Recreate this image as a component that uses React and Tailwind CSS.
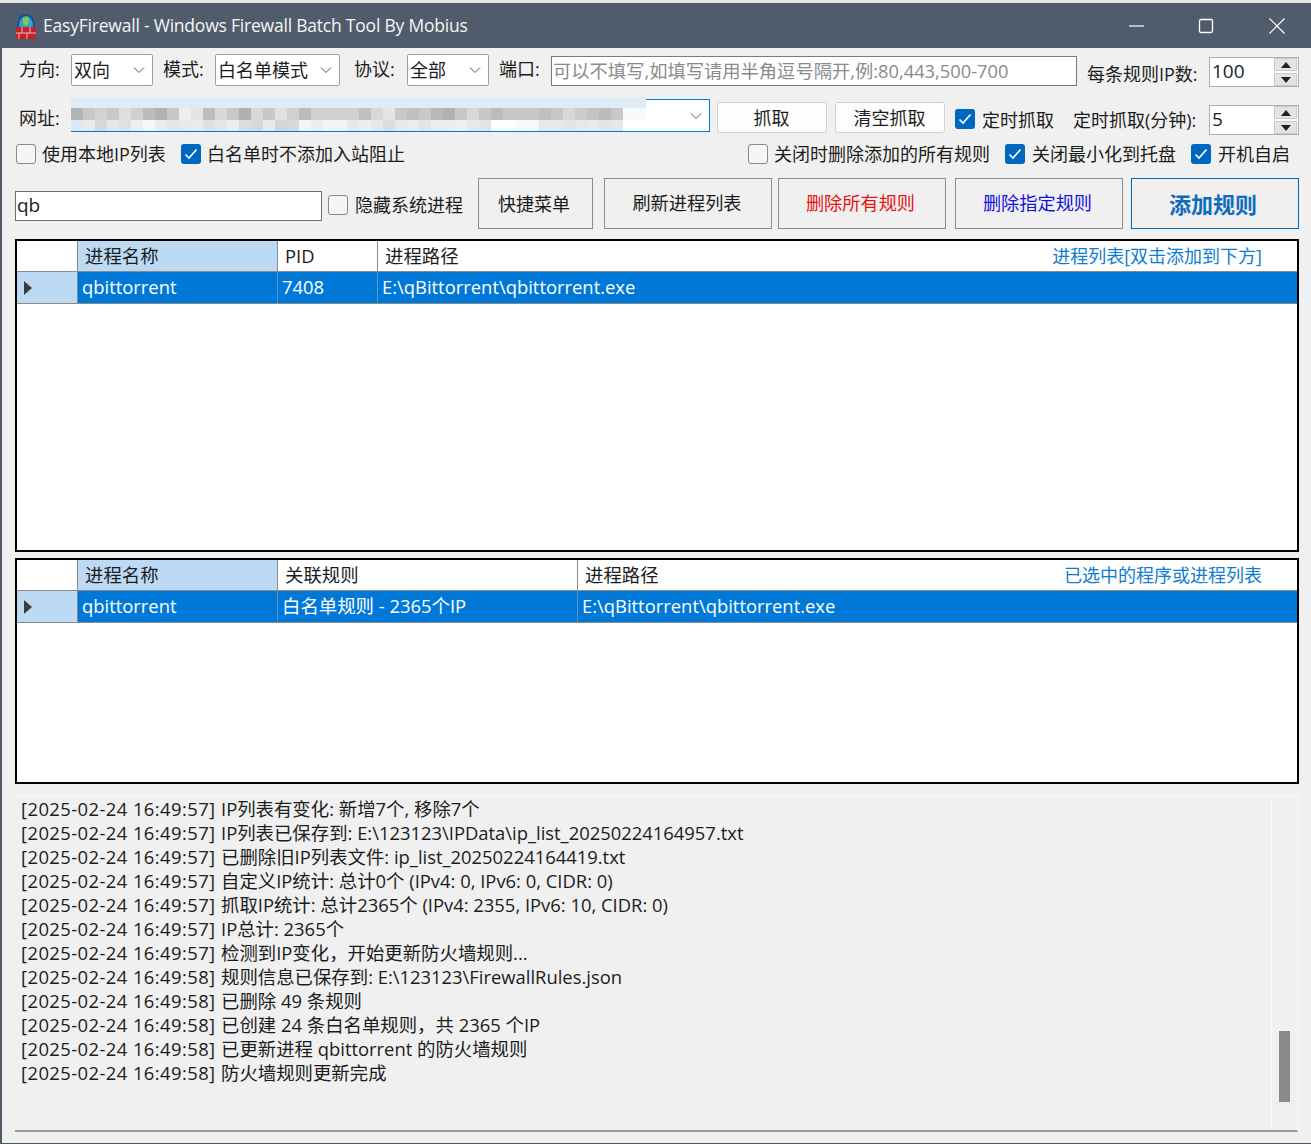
const FONT = "font-['Open_Sans','Noto_Sans_CJK_SC',sans-serif]";

const row2 = ["b5","c8","d2","c8","de","d0","bc","b2","c8","ee","e4","bc","d8","c8","b0","d8","c8","e0","d0","bc","d0","d0","d0","d0","c0","d8","e4","c8","c0","c8","b8","b0","c8","d8","c8","bc","c8","c8","c8","c0","c8","d8","cc","c4","bc","c8"];
const row3 = ["d4","ea","d8","e6","e0","ee","f6","ec","e6","e8","ea","e0","e6","ee","dc","d8","e8","d4","d8","f4","ee","f4","f4","e8","ee","e8","dc","e8","ec","e4","ec","ec","f0","e8","e4","fe","fe","fa","f8","e8","e8","e4","e8","ea","e4","e8"];

const logs = [
  ["[2025-02-24 16:49:57]", "IP列表有变化: 新增7个, 移除7个"],
  ["[2025-02-24 16:49:57]", "IP列表已保存到: E:\\123123\\IPData\\ip_list_20250224164957.txt"],
  ["[2025-02-24 16:49:57]", "已删除旧IP列表文件: ip_list_20250224164419.txt"],
  ["[2025-02-24 16:49:57]", "自定义IP统计: 总计0个 (IPv4: 0, IPv6: 0, CIDR: 0)"],
  ["[2025-02-24 16:49:57]", "抓取IP统计: 总计2365个 (IPv4: 2355, IPv6: 10, CIDR: 0)"],
  ["[2025-02-24 16:49:57]", "IP总计: 2365个"],
  ["[2025-02-24 16:49:57]", "检测到IP变化，开始更新防火墙规则..."],
  ["[2025-02-24 16:49:58]", "规则信息已保存到: E:\\123123\\FirewallRules.json"],
  ["[2025-02-24 16:49:58]", "已删除 49 条规则"],
  ["[2025-02-24 16:49:58]", "已创建 24 条白名单规则，共 2365 个IP"],
  ["[2025-02-24 16:49:58]", "已更新进程 qbittorrent 的防火墙规则"],
  ["[2025-02-24 16:49:58]", "防火墙规则更新完成"],
];

function Chevron() {
  return (
    <svg width="12" height="8" viewBox="0 0 12 8" fill="none" stroke="#555" strokeWidth="1">
      <path d="M1 1.5 L6 6.5 L11 1.5" />
    </svg>
  );
}

function Combo({ w, text }) {
  return (
    <div className={`${w} h-[32px] bg-white border border-[#a0a0a0] rounded-[2px] flex items-center justify-between pl-[2px] pr-[7px] shrink-0`}>
      <span>{text}</span>
      <Chevron />
    </div>
  );
}

function Check({ on }) {
  return on ? (
    <div className="w-[20px] h-[20px] rounded-[3px] bg-[#0067c0] flex items-center justify-center shrink-0">
      <svg width="14" height="12" viewBox="0 0 14 12" fill="none" stroke="#fff" strokeWidth="1.6">
        <path d="M1.5 6.5 L5 10 L12.5 1.5" />
      </svg>
    </div>
  ) : (
    <div className="w-[20px] h-[20px] rounded-[3px] bg-[#f5f5f5] border border-[#8a8a8a] shrink-0" />
  );
}

function Spin({ text }) {
  return (
    <div className="w-[90px] h-[30px] bg-white border border-[#b0b0b0] flex items-center justify-between pl-[2px] shrink-0">
      <span className="text-[19px] -mt-[2px]">{text}</span>
      <div className="w-[23px] h-[28px] mr-[1px] flex flex-col gap-[2px]">
        {[0, 1].map((i) => (
          <div key={i} className="flex-1 bg-[#e4e4e4] border border-[#c8c8c8] flex items-center justify-center">
            <svg width="10" height="6" viewBox="0 0 10 6" fill="#222">
              <path d={i === 0 ? "M5 0 L10 6 L0 6 Z" : "M5 6 L10 0 L0 0 Z"} />
            </svg>
          </div>
        ))}
      </div>
    </div>
  );
}

function Btn({ w, children, cls = "" }) {
  return (
    <div className={`${w} h-[51px] border border-[#8c8c8c] flex items-center justify-center shrink-0 ${cls}`}>
      {children}
    </div>
  );
}

function Grid({ h, widths, heads, cells, caption, captionRight }) {
  return (
    <div className={`${h} border-2 border-black bg-white flex flex-col shrink-0 text-[18.4px]`}>
      <div className="h-[31px] flex shrink-0 border-b border-[#8a8a8a]">
        <div className="w-[61px] border-r border-[#8a8a8a] shrink-0" />
        {heads.map((t, i) => (
          <div
            key={t}
            className={`${widths[i]} ${i === 0 ? "bg-[#bcdaf3]" : ""} ${i === heads.length - 1 ? "grow flex justify-between" : "border-r border-[#8a8a8a] shrink-0"} pl-[7px] flex items-center`}
          >
            <span>{t}</span>
            {i === heads.length - 1 && <span className={`text-[#0f7ccf] text-[18px] ${captionRight}`}>{caption}</span>}
          </div>
        ))}
      </div>
      <div className="h-[32px] flex shrink-0 border-b border-[#8a8a8a]">
        <div className="w-[61px] bg-[#bcdaf3] border-r border-[#8a8a8a] flex items-center pl-[6px] shrink-0">
          <svg width="10" height="14" viewBox="0 0 10 14" fill="#3c3c3c">
            <path d="M1 0 L9 7 L1 14 Z" />
          </svg>
        </div>
        {cells.map((t, i) => (
          <div
            key={t}
            className={`${widths[i]} bg-[#0078d7] text-white ${i === cells.length - 1 ? "grow" : "border-r border-[#5a96c8] shrink-0"} pl-[4px] flex items-center`}
          >
            {t}
          </div>
        ))}
      </div>
    </div>
  );
}

export default function App() {
  return (
    <div className={`w-[1311px] h-[1144px] overflow-hidden bg-[#e4e4e4] pt-[3px] ${FONT} text-[18px] text-[#1c1c1c] leading-none`}>
      <div className="h-[1141px] bg-[#f0f0f0] border-l-2 border-b border-[#4f5a68] flex flex-col">
        {/* title bar */}
        <div className="h-[45px] bg-[#505c6b] flex items-center text-white shrink-0">
          <svg width="24" height="26" viewBox="0 0 24 26" className="ml-[12px]">
            <path d="M3 14 C3 5 7 1 12 1 C17 1 21 5 21 14 Z" fill="#1d4f86" />
            <path d="M5 14 C5 7 8 3 12 3 C16 3 19 7 19 14 Z" fill="#2aa2dc" />
            <path d="M9 5 L14 4 L15 9 L12 13 L9 10 Z" fill="#8fc63f" />
            <rect x="2" y="14" width="20" height="12" fill="#c4222b" />
            <path d="M2 20 H22 M8 14 V20 M16 14 V20 M5 20 V26 M13 20 V26" stroke="#f2b8b8" strokeWidth="1" />
          </svg>
          <span className="ml-[5px] text-[17.5px] text-[#f4f4f4] tracking-[-0.21px]">EasyFirewall - Windows Firewall Batch Tool By Mobius</span>
          <div className="ml-auto flex items-center">
            <svg width="16" height="16" viewBox="0 0 16 16" stroke="#fff" fill="none" strokeWidth="1.2" className="mr-[53px]">
              <path d="M0 8 H15" />
            </svg>
            <svg width="16" height="16" viewBox="0 0 16 16" stroke="#fff" fill="none" strokeWidth="1.3" className="mr-[55px]">
              <rect x="1.5" y="1.5" width="13" height="13" rx="1.5" />
            </svg>
            <svg width="16" height="16" viewBox="0 0 16 16" stroke="#fff" fill="none" strokeWidth="1.2" className="mr-[26px]">
              <path d="M0.5 0.5 L15.5 15.5 M15.5 0.5 L0.5 15.5" />
            </svg>
          </div>
        </div>

        {/* row 1 */}
        <div className="h-[33px] mt-[6px] flex items-start shrink-0">
          <span className="ml-[17px] w-[52px] mt-[6px]">方向:</span>
          <Combo w="w-[82px]" text="双向" />
          <span className="ml-[10px] w-[52px] mt-[6px]">模式:</span>
          <Combo w="w-[125px]" text="白名单模式" />
          <span className="ml-[14px] w-[53px] mt-[6px]">协议:</span>
          <Combo w="w-[82px]" text="全部" />
          <span className="ml-[10px] w-[52px] mt-[6px]">端口:</span>
          <div className="w-[526px] h-[30px] mt-[2px] bg-white border border-[#7a7a7a] pl-[1px] flex items-center text-[#8a8a8a] text-[18.3px] shrink-0">
            可以不填写,如填写请用半角逗号隔开,例:80,443,500-700
          </div>
          <span className="ml-[10px] w-[122px] mt-[11px] whitespace-nowrap">每条规则IP数:</span>
          <div className="mt-[3px]"><Spin text="100" /></div>
        </div>

        {/* row 2 */}
        <div className="h-[38px] mt-[10px] flex items-start shrink-0">
          <span className="ml-[17px] w-[52px] mt-[12px]">网址:</span>
          <div className="w-[639px] h-[35px] flex flex-col border-b border-[#0078d4] shrink-0 relative">
            <div className="h-[11px] w-[575px] bg-[#e0ebf4]" />
            <div className="h-[12px] flex">
              {row2.map((c, i) => (
                <div key={i} className="w-[12px] h-full" style={{ background: `#${c}${c}${c}` }} />
              ))}
              <div className="w-[24px] h-full bg-[#f8f9fb]" />
            </div>
            <div className="h-[11px] flex bg-white">
              <div className="w-[12px] bg-[#dce9f4]" />
              {row3.slice(1, 46).map((c, i) => (
                <div key={i} className="w-[12px] h-full" style={{ background: `#${c}${c}${c}` }} />
              ))}
            </div>
            <div className="absolute right-0 bottom-0 w-[64px] h-[32px] bg-white border-t border-r border-[#0078d4] flex items-center justify-end pr-[7px]">
              <Chevron />
            </div>
          </div>
          <div className="ml-[7px] mt-[5px] w-[110px] h-[31px] bg-[#fdfdfd] border border-[#d0d0d0] rounded-[3px] flex items-center justify-center pr-[1px] shrink-0">抓取</div>
          <div className="ml-[8px] mt-[5px] w-[110px] h-[31px] bg-[#fdfdfd] border border-[#d0d0d0] rounded-[3px] flex items-center justify-center pr-[1px] shrink-0">清空抓取</div>
          <div className="ml-[10px] mt-[12px]"><Check on /></div>
          <span className="ml-[7px] w-[91px] mt-[14px] whitespace-nowrap">定时抓取</span>
          <span className="w-[136px] mt-[14px] whitespace-nowrap">定时抓取(分钟):</span>
          <div className="mt-[8px]"><Spin text="5" /></div>
        </div>

        {/* row 3 */}
        <div className="h-[22px] mt-[8px] flex items-center shrink-0">
          <div className="ml-[14px]"><Check /></div>
          <span className="ml-[6px] w-[139px] whitespace-nowrap">使用本地IP列表</span>
          <Check on />
          <span className="ml-[6px] whitespace-nowrap">白名单时不添加入站阻止</span>
          <div className="ml-auto flex items-center">
            <Check />
            <span className="ml-[6px] w-[231px] whitespace-nowrap">关闭时删除添加的所有规则</span>
            <Check on />
            <span className="ml-[7px] w-[159px] whitespace-nowrap">关闭最小化到托盘</span>
            <Check on />
            <span className="ml-[7px] w-[93px] whitespace-nowrap">开机自启</span>
          </div>
        </div>

        {/* row 4 */}
        <div className="h-[51px] mt-[13px] flex items-center shrink-0">
          <div className="ml-[13px] w-[307px] h-[30px] mt-[4px] bg-white border border-[#6e6e6e] pl-[1px] flex items-center text-[19px] shrink-0">qb</div>
          <div className="ml-[6px] mt-[2px]"><Check /></div>
          <span className="ml-[7px] w-[123px] mt-[2px] whitespace-nowrap">隐藏系统进程</span>
          <Btn w="w-[115px] pr-[3px]">快捷菜单</Btn>
          <Btn w="w-[168px] ml-[11px] text-[18.2px] pr-[2px]">刷新进程列表</Btn>
          <Btn w="w-[168px] ml-[6px] text-[18.2px] pr-[3px]" cls="text-[#e81212]">删除所有规则</Btn>
          <Btn w="w-[168px] ml-[9px] text-[18.2px] pr-[3px]" cls="text-[#1212e0]">删除指定规则</Btn>
          <Btn w="w-[168px] ml-[8px] !border-[#0067c0] text-[22px] font-bold pr-[4px]" cls="text-[#0f6cbd]">添加规则</Btn>
        </div>

        {/* grids */}
        <div className="ml-[13px] w-[1284px] mt-[10px] shrink-0">
          <Grid
            h="h-[313px]"
            widths={["w-[200px]", "w-[100px]", "w-[100px]"]}
            heads={["进程名称", "PID", "进程路径"]}
            cells={["qbittorrent", "7408", "E:\\qBittorrent\\qbittorrent.exe"]}
            caption="进程列表[双击添加到下方]"
            captionRight="mr-[35px]"
          />
          <div className="h-[6px]" />
          <Grid
            h="h-[226px]"
            widths={["w-[200px]", "w-[300px]", "w-[100px]"]}
            heads={["进程名称", "关联规则", "进程路径"]}
            cells={["qbittorrent", "白名单规则 - 2365个IP", "E:\\qBittorrent\\qbittorrent.exe"]}
            caption="已选中的程序或进程列表"
            captionRight="mr-[35px]"
          />
        </div>

        {/* log */}
        <div className="ml-[13px] w-[1283px] h-[337px] mt-[11px] flex border-t border-[#f8f8f8] border-r border-b-2 border-r-[#f8f8f8] border-b-[#9a9a9a] text-[18.4px] shrink-0">
          <div className="grow pl-[6px] pt-[1px]">
            {logs.map(([t, m], i) => (
              <div key={i} className="h-[24px] flex items-center whitespace-nowrap">
                <span className="w-[200px] tracking-[0.43px] shrink-0">{t}</span>
                <span>{m}</span>
              </div>
            ))}
          </div>
          <div className="w-[26px] border-l border-[#f8f8f8] pt-[235px] pl-[7px] shrink-0">
            <div className="w-[11px] h-[71px] bg-[#8a8a8a]" />
          </div>
        </div>
      </div>
    </div>
  );
}
